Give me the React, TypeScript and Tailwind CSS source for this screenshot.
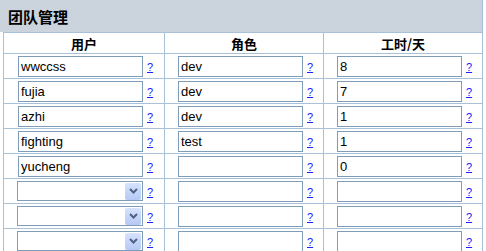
import React from "react";

const rows: { user: string; role: string; hours: string; select?: boolean }[] = [
  { user: "wwccss", role: "dev", hours: "8" },
  { user: "fujia", role: "dev", hours: "7" },
  { user: "azhi", role: "dev", hours: "1" },
  { user: "fighting", role: "test", hours: "1" },
  { user: "yucheng", role: "", hours: "0" },
  { user: "", role: "", hours: "", select: true },
  { user: "", role: "", hours: "", select: true },
  { user: "", role: "", hours: "", select: true },
];

function Help() {
  return (
    <a
      href="#"
      className="ml-[4px] mt-[6px] text-[11px] leading-none text-[#2020ff] underline"
      style={{ fontFamily: '"Liberation Sans", Arial, sans-serif' }}
    >
      ?
    </a>
  );
}

function TextBox({ value }: { value: string }) {
  return (
    <div className="flex h-[21px] w-[125px] items-center border border-[#7f9db9] bg-white pl-[2px] text-[13px] text-black">
      {value}
    </div>
  );
}

function SelectBox() {
  return (
    <div className="ml-[-1px] flex h-[20px] w-[126px] items-center justify-end border border-[#7f9db9] bg-white pr-[1px]">
      <div className="flex h-[17px] w-[16px] items-center justify-center rounded-[2px] bg-gradient-to-b from-[#d7e3fd] to-[#b5c9f5]">
        <svg width="9" height="6" viewBox="0 0 9 6">
          <path d="M1 1 L4.5 4.5 L8 1" fill="none" stroke="#4d6185" strokeWidth="2" />
        </svg>
      </div>
    </div>
  );
}

export default function App() {
  return (
    <div
      className="w-[486px] h-[251px] overflow-hidden bg-white text-black"
      style={{ fontFamily: '"Liberation Sans", Arial, "Noto Sans CJK SC", sans-serif' }}
    >
      <div className="flex h-[32px] w-[483px] items-center border-r border-[#a8c0d8] bg-[#cbd3dc] pl-[8px]">
        <span
          className="text-[15px] font-bold leading-none"
          style={{ fontFamily: '"Noto Sans CJK SC", sans-serif' }}
        >
          团队管理
        </span>
      </div>
      <div className="ml-[3px] w-[480px] border-x border-t border-[#a8c0d8]">
        <div
          className="flex h-[21px] border-b border-[#a8c0d8] text-[13px] font-bold"
          style={{ fontFamily: '"Noto Sans CJK SC", sans-serif' }}
        >
          <div className="flex w-[161px] items-center justify-center border-r border-[#a8c0d8] leading-none">用户</div>
          <div className="flex w-[159px] items-center justify-center border-r border-[#a8c0d8] leading-none">角色</div>
          <div className="flex w-[158px] items-center justify-center leading-none">工时/天</div>
        </div>
        {rows.map((r, i) => (
          <div key={i} className="flex h-[25px] border-b border-[#a8c0d8]">
            <div className="flex w-[161px] items-start border-r border-[#a8c0d8] pl-[14px] pt-[2px]">
              {r.select ? <SelectBox /> : <TextBox value={r.user} />}
              <Help />
            </div>
            <div className="flex w-[159px] items-start border-r border-[#a8c0d8] pl-[13px] pt-[2px]">
              <TextBox value={r.role} />
              <Help />
            </div>
            <div className="flex w-[158px] items-start pl-[13px] pt-[2px]">
              <TextBox value={r.hours} />
              <Help />
            </div>
          </div>
        ))}
      </div>
    </div>
  );
}
